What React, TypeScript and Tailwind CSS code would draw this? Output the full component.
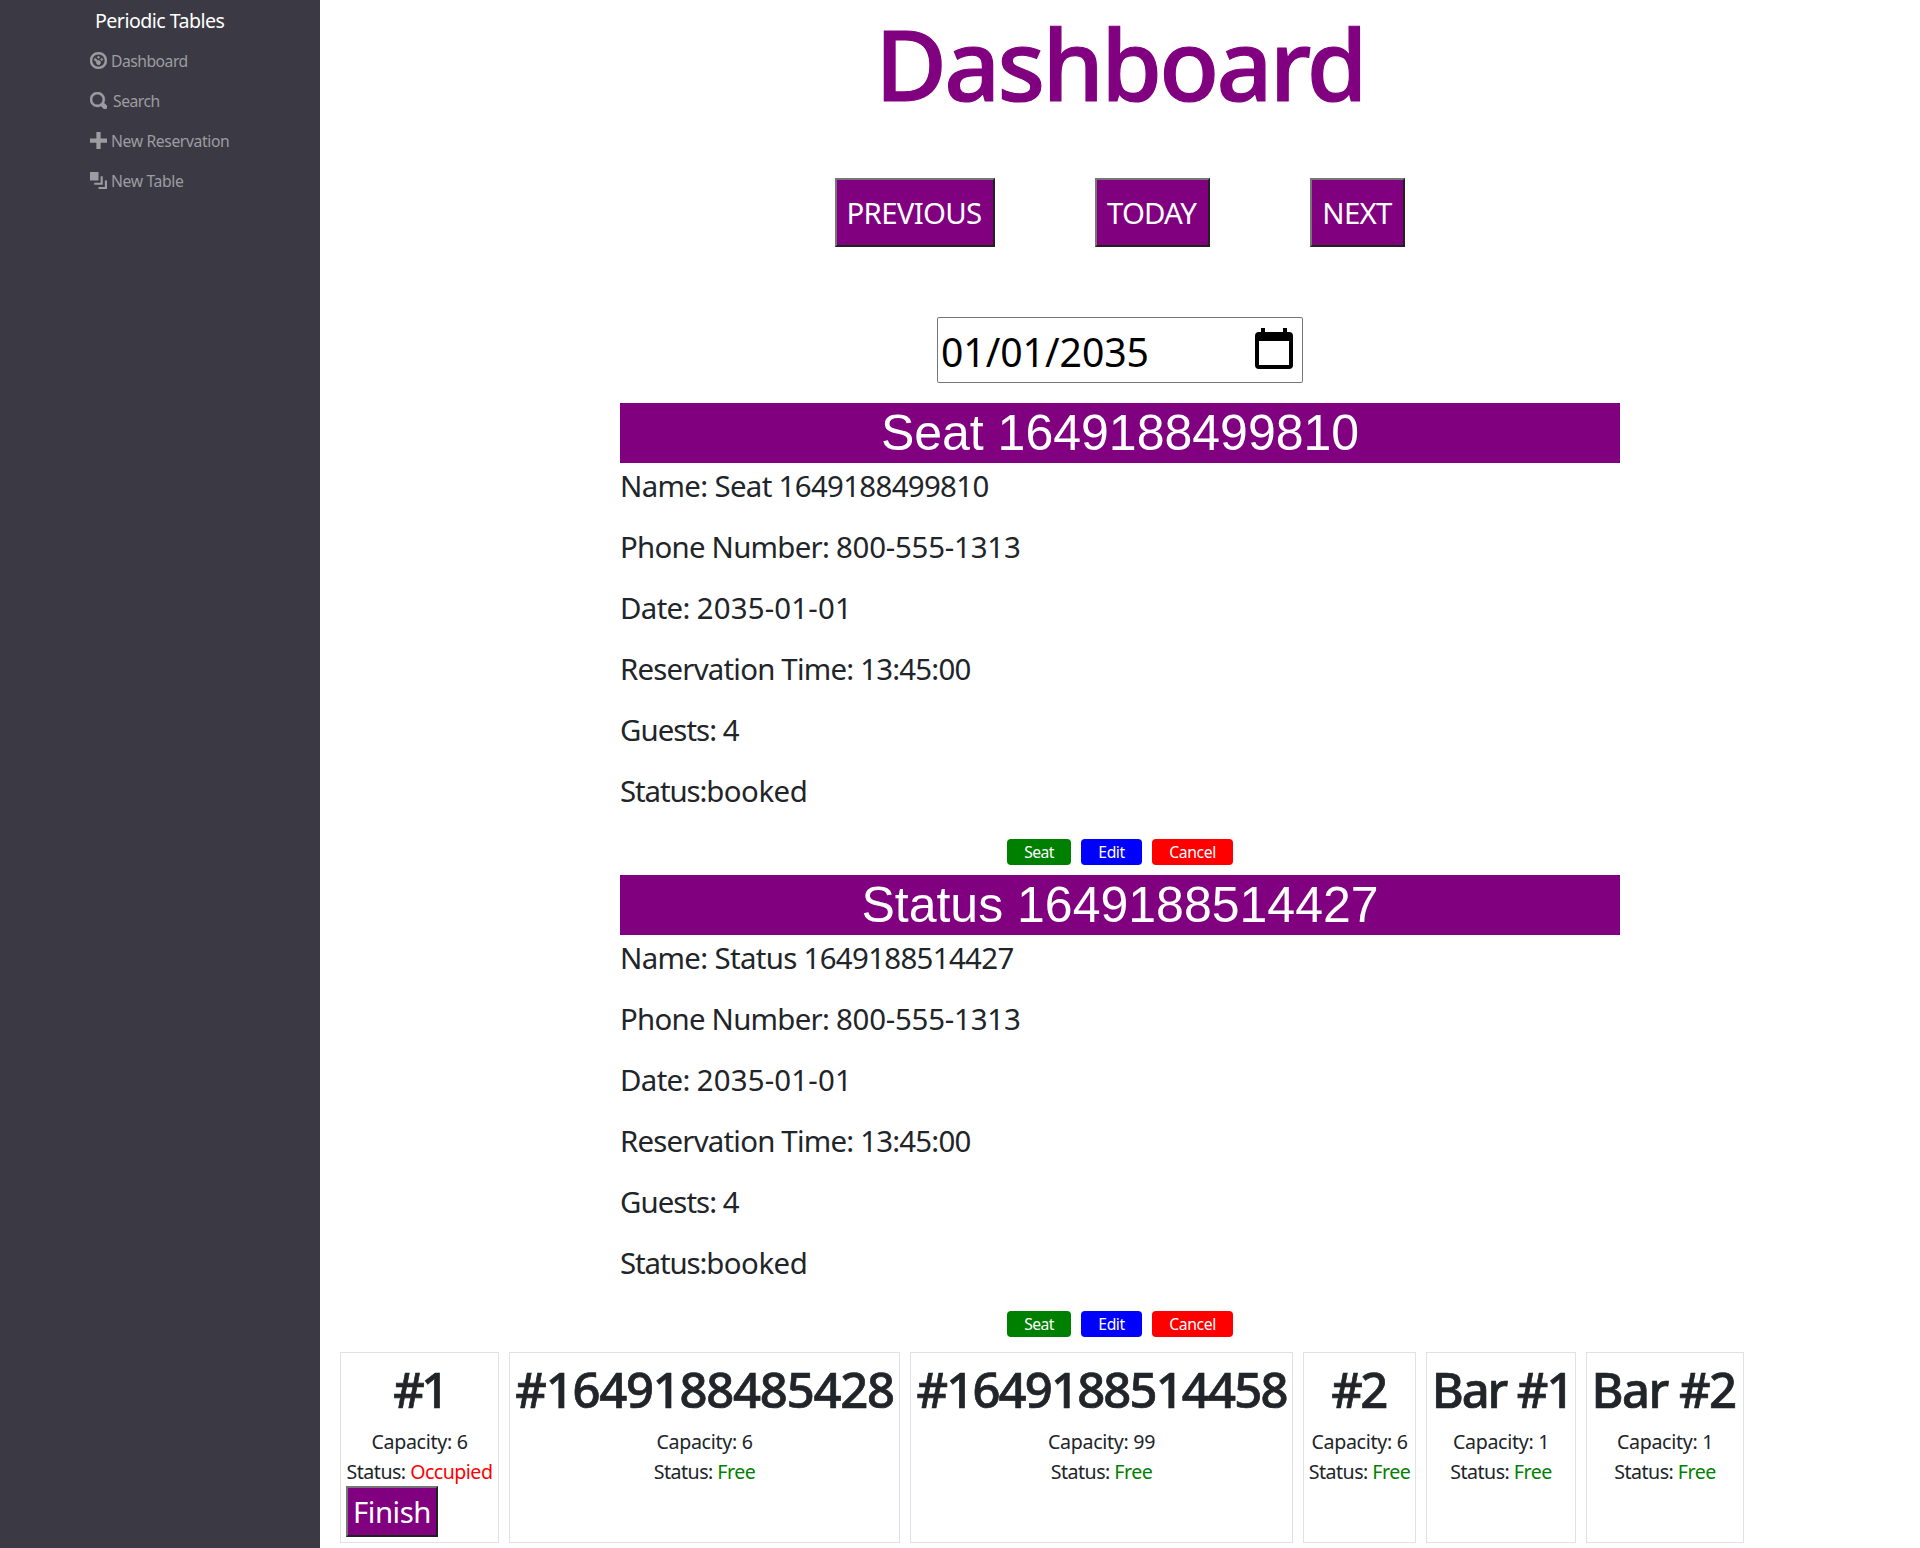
import React from "react";

const icons = {
  dashboard:
    "M4 0c-2.2 0-4 1.8-4 4s1.8 4 4 4 4-1.8 4-4-1.8-4-4-4zm0 1c1.66 0 3 1.34 3 3s-1.34 3-3 3-3-1.34-3-3 1.34-3 3-3zm0 1c-.28 0-.5.22-.5.5s.22.5.5.5.5-.22.5-.5-.22-.5-.5-.5zm-1.66 1a.5.5 0 0 0-.19.84l.91.91c-.02.08-.06.16-.06.25 0 .55.45 1 1 1s1-.45 1-1-.45-1-1-1c-.09 0-.17.04-.25.06l-.91-.91a.5.5 0 0 0-.44-.16.5.5 0 0 0-.06 0zm3.16 0c-.28 0-.5.22-.5.5s.22.5.5.5.5-.22.5-.5-.22-.5-.5-.5z",
  search:
    "M3.5 0c-1.93 0-3.5 1.57-3.5 3.5s1.57 3.5 3.5 3.5c.59 0 1.17-.14 1.66-.41a1 1 0 0 0 .13.13l1 1a1.02 1.02 0 1 0 1.44-1.44l-1-1a1 1 0 0 0-.16-.13c.27-.49.44-1.06.44-1.66 0-1.93-1.55-3.5-3.5-3.5zm0 1c1.39 0 2.5 1.11 2.5 2.5 0 .66-.24 1.27-.66 1.72-.01.01-.02.02-.03.03a1 1 0 0 0-.13.13c-.44.4-1.04.63-1.69.63-1.39 0-2.5-1.11-2.5-2.5s1.11-2.5 2.5-2.5z",
  plus: "M3 0v3h-3v2h3v3h2v-3h3v-2h-3v-3h-2z",
  layers: "M0 0v4h4v-4h-4zm5 2v3h-3v1h4v-4h-1zm2 2v3h-3v1h4v-4h-1z",
};

const links = [
  { icon: icons.dashboard, label: "Dashboard", cls: "ml-1 tracking-[-0.5px]", stroke: 0.22 },
  { icon: icons.search, label: "Search", cls: "ml-1.5 tracking-[-0.48px]", stroke: 0.22 },
  { icon: icons.plus, label: "New Reservation", cls: "ml-1 tracking-[-0.37px]", stroke: 0 },
  { icon: icons.layers, label: "New Table", cls: "ml-1 tracking-[-0.35px]", stroke: 0 },
];

const reservations = [
  { name: "Seat 1649188499810" },
  { name: "Status 1649188514427" },
];

const tables = [
  { name: "#1", capacity: 6, free: false, width: "w-[159px]", heading: "tracking-[-3.5px]" },
  { name: "#1649188485428", capacity: 6, free: true, width: "w-[391px]", heading: "tracking-[-1.25px]" },
  { name: "#1649188514458", capacity: 99, free: true, width: "w-[383px]", heading: "tracking-[-1.85px]" },
  { name: "#2", capacity: 6, free: true, width: "w-[113px]", heading: "mr-0.5 tracking-[-2.5px]" },
  { name: "Bar #1", capacity: 1, free: true, width: "w-[150px]", heading: "-mr-0.5 tracking-[-2.1px]" },
  { name: "Bar #2", capacity: 1, free: true, width: "w-[158px]", heading: "mr-[3px] tracking-[-1.5px]" },
];

const bevel =
  "shrink-0 border-2 border-t-[#767676] border-l-[#767676] border-r-[#212121] border-b-[#212121] bg-[#800080] text-[29.4px] text-white whitespace-nowrap";

function Sidebar() {
  return (
    <nav className="flex w-80 shrink-0 flex-col bg-[#3b3a44]">
      <div className="mt-1.5 ml-[95px] h-[34px] text-[19.6px] leading-[30px] tracking-[-0.53px] text-white">
        Periodic Tables
      </div>
      {links.map((l) => (
        <a key={l.label} className="ml-[90px] flex h-10 items-center text-[15.7px] text-[#9d9ca1]">
          <svg viewBox="0 0 8 8" className="h-[17px] w-[17px] shrink-0 fill-current stroke-current" strokeWidth={l.stroke}>
            <path d={l.icon} />
          </svg>
          <span className={`mt-1 ${l.cls}`}>{l.label}</span>
        </a>
      ))}
    </nav>
  );
}

function Reservation({ name }: { name: string }) {
  const rows = [
    { label: "Name: ", value: name, cls: "tracking-[-0.66px]", valueCls: "tracking-[-0.66px]" },
    { label: "Phone Number: ", value: "800-555-1313", cls: "tracking-[-0.75px]", valueCls: "tracking-[-0.2px]" },
    { label: "Date: ", value: "2035-01-01", cls: "tracking-[-0.65px]", valueCls: "tracking-[0.17px]" },
    { label: "Reservation Time: ", value: "13:45:00", cls: "tracking-[-0.79px]", valueCls: "tracking-[-0.79px]" },
    { label: "Guests: ", value: "4", cls: "tracking-[-0.95px]", valueCls: "tracking-[-0.95px]" },
    { label: "Status:", value: "booked", cls: "tracking-[-1.1px]", valueCls: "tracking-[-0.5px]" },
  ];
  return (
    <section className="mb-2.5 w-[1000px]">
      <h2 className="h-[60px] bg-[#800080] text-center font-['Liberation_Sans',sans-serif] text-[50px] leading-[60px] text-white">
        {name}
      </h2>
      <div className="pt-px">
        {rows.map((r) => (
          <p key={r.label} className={`mb-4 text-[29.4px] leading-[45px] whitespace-pre ${r.cls}`}>
            {r.label}
            <span className={r.valueCls}>{r.value}</span>
          </p>
        ))}
      </div>
      <div className="mt-[25px] ml-[387px] flex gap-2.5 text-[15.7px] leading-[26px] text-white">
        <button className="h-[26px] w-16 rounded-[4px] bg-[#008000] tracking-[-0.6px]">Seat</button>
        <button className="h-[26px] w-[61px] rounded-[4px] bg-[#0000ff] tracking-[-0.45px]">Edit</button>
        <button className="h-[26px] w-[81px] rounded-[4px] bg-[#ff0000] tracking-[-0.35px]">Cancel</button>
      </div>
    </section>
  );
}

export default function App() {
  return (
    <div className="flex h-[1548px] w-[1920px] bg-white font-['Noto_Sans',sans-serif] text-[#212529]">
      <Sidebar />
      <main className="flex min-w-0 flex-1 flex-col items-center">
        <h1 className="h-[178px] text-[98px] leading-[127px] font-medium tracking-[-2.7px] text-[#800080] [-webkit-text-stroke:1.2px_#800080]">
          Dashboard
        </h1>
        <div className="flex gap-[100px]">
          <button className={`h-[69px] w-40 pt-0.5 pr-0.5 tracking-[-0.7px] ${bevel}`}>PREVIOUS</button>
          <button className={`h-[69px] w-[115px] pt-0.5 pr-0.5 tracking-[-0.85px] ${bevel}`}>TODAY</button>
          <button className={`h-[69px] w-[95px] pt-0.5 pr-px tracking-[-0.7px] ${bevel}`}>NEXT</button>
        </div>
        <div className="mt-[70px] mb-5 flex h-[66px] w-[366px] justify-between rounded-[2px] border border-[#767676] pr-[9px] pl-[3px] text-[39.2px] leading-[67px] tracking-[-0.05px] text-black">
          <span>01/01/2035</span>
          <svg viewBox="0 0 38 42" className="mt-[9px] h-[42px] w-[38px]">
            <path
              fillRule="evenodd"
              d="M6 1h4v4h18v-4h4v4h2a4 4 0 0 1 4 4v29a4 4 0 0 1-4 4h-30a4 4 0 0 1-4-4v-29a4 4 0 0 1 4-4h2zM4 14v24h30v-24z"
            />
          </svg>
        </div>
        {reservations.map((r) => (
          <Reservation key={r.name} name={r.name} />
        ))}
        <div className="mt-[5px] ml-5 flex h-[191px] gap-2.5 self-start">
          {tables.map((t) => (
            <div
              key={t.name}
              className={`flex flex-col items-center border border-[#dee2e6] px-[5px] pt-1.5 text-[19.6px] leading-[30px] whitespace-nowrap ${t.width}`}
            >
              <h2 className={`mb-2 text-[49px] leading-[60px] font-medium [-webkit-text-stroke:0.7px_#212529] ${t.heading}`}>
                {t.name}
              </h2>
              <p className="tracking-[-0.3px]">Capacity: {t.capacity}</p>
              <p className="tracking-[-0.52px]">
                Status: <span className={t.free ? "text-[#008000]" : "text-[#ff0000]"}>{t.free ? "Free" : "Occupied"}</span>
              </p>
              {!t.free && <button className={`-mt-px h-[51px] w-[92px] self-start tracking-[-0.5px] ${bevel}`}>Finish</button>}
            </div>
          ))}
        </div>
      </main>
    </div>
  );
}
